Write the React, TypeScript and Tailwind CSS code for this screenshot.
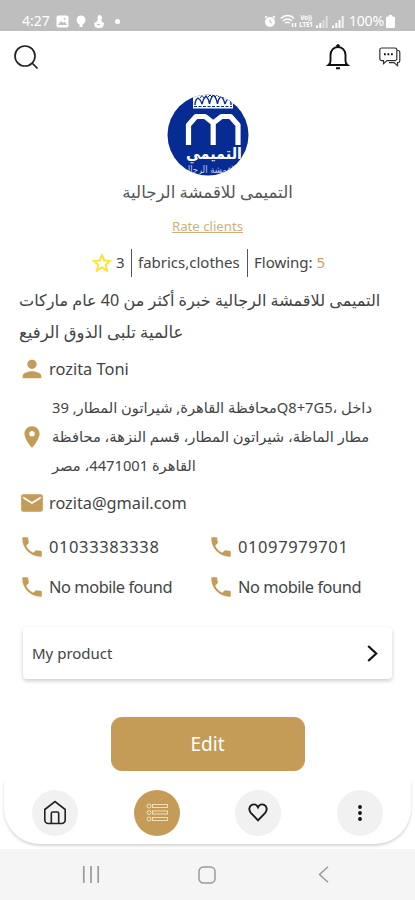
import type { ReactNode } from "react";
import { MdEmail, MdLocationOn, MdPerson, MdPhone } from "react-icons/md";

const StatusBar = () => (
    <div className="h-[31px] bg-[#bebebe] text-white flex items-end justify-between pl-[22px] pr-[20px] pb-[1px]">
        <div className="flex items-center h-[18px]">
            <span className="w-[29px] text-[14px] leading-none">4:27</span>
            <svg className="ml-[5px]" width="13" height="13" viewBox="0 0 13 13">
                <rect x="0.5" y="0.5" width="12" height="12" rx="2" fill="#fff" />
                <path d="M2 10l3-4 2 2 1.5-1.5L11 10z" fill="#bebebe" />
                <circle cx="8.5" cy="3.8" r="1" fill="#bebebe" />
            </svg>
            <svg className="ml-[7px]" width="10" height="13" viewBox="0 0 10 13">
                <circle cx="5" cy="5" r="4.5" fill="#fff" />
                <path d="M3.5 8.5h3V12h-3z" fill="#fff" />
            </svg>
            <svg className="ml-[7px]" width="13" height="13" viewBox="0 0 13 13">
                <path d="M6.5 0a2.5 2.5 0 0 1 1.8 4.3L9 7l2 1-1 4c-2 1.3-6 1.3-8 0L1 8l2.5-1 1.5-2.8A2.5 2.5 0 0 1 6.5 0z" fill="#fff" />
                <path d="M4 9.5h3" stroke="#bebebe" />
            </svg>
            <span className="ml-[9px] size-[5px] rounded-full bg-white" />
        </div>
        <div className="flex items-center h-[18px]">
            <svg width="12" height="13" viewBox="0 0 12 13">
                <circle cx="6" cy="7" r="5" fill="#fff" />
                <path d="M1 3l2-2M11 3L9 1" stroke="#fff" strokeWidth="1.6" />
                <path d="M6 4.5V7l2 1" stroke="#bebebe" fill="none" />
            </svg>
            <svg className="ml-[4px]" width="18" height="14" viewBox="0 0 18 14" fill="none" stroke="#fff" strokeWidth="1.5">
                <path d="M0.8 4.5c4-4 9.5-4 13.5 0M3 7c2.7-2.7 6.5-2.7 9 0M5.3 9.3c1.5-1.5 3.2-1.5 4.5 0" />
                <path d="M12.5 9v4M15.5 9v4" />
            </svg>
            <span className="w-[16px] text-[6.5px] leading-[7px] font-bold text-center tracking-[-0.3px]">
                <span className="block">Vo))</span>
                <span className="block">LTE1</span>
            </span>
            <svg className="ml-[2px]" width="12" height="13" viewBox="0 0 12 13" fill="#fff">
                <path d="M0 10.5h2V13H0zM3.3 8h2v5h-2z" />
                <path opacity="0.5" d="M6.5 5h2v8h-2zM9.7 1h2v12h-2z" />
            </svg>
            <svg className="ml-[4px]" width="12" height="13" viewBox="0 0 12 13" fill="#fff">
                <path d="M0 10.5h2V13H0zM3.3 8h2v5h-2zM6.5 5h2v8h-2z" />
                <path opacity="0.8" d="M9.7 1h2v12h-2z" />
            </svg>
            <span className="ml-[5px] w-[36px] text-[14px] leading-none tracking-[-0.2px]">100%</span>
            <svg className="ml-[1px]" width="9" height="13" viewBox="0 0 9 13">
                <path d="M3 0h3v1.5h1.5A1.5 1.5 0 0 1 9 3v8.5A1.5 1.5 0 0 1 7.5 13h-6A1.5 1.5 0 0 1 0 11.5V3a1.5 1.5 0 0 1 1.5-1.5H3z" fill="#fff" />
            </svg>
        </div>
    </div>
);

const Header = () => (
    <div className="h-[63px] flex items-start justify-between pl-[13px] pr-[14px] pt-[13px]">
        <svg width="26" height="26" viewBox="0 0 26 26" fill="none" stroke="#222" strokeWidth="1.7">
            <circle cx="12" cy="12" r="10" />
            <path d="M19 19l5.5 5.5" />
        </svg>
        <div className="flex gap-[29px]">
            <svg width="24" height="27" viewBox="0 0 24 27" fill="none" stroke="#111" strokeWidth="1.9">
                <path d="M12 3C7.5 3 4.5 6.5 4.5 11v6c0 2-.5 2.8-2 4h19c-1.5-1.2-2-2-2-4v-6c0-4.5-3-8-7.5-8z" />
                <path d="M10.5 2.5L12 1l1.5 1.5M10 24.3h4" />
            </svg>
            <svg className="mt-[3px]" width="22" height="21" viewBox="0 0 22 21" fill="none" stroke="#333" strokeWidth="1.2">
                <path d="M2.5 1h13.5a1.8 1.8 0 0 1 1.8 1.8v9a1.8 1.8 0 0 1-1.8 1.8H8l-3.5 3v-3h-2A1.8 1.8 0 0 1 .8 11.8v-9A1.8 1.8 0 0 1 2.5 1z" />
                <path d="M18 3.5h1a1.8 1.8 0 0 1 1.8 1.8v8.5a1.8 1.8 0 0 1-1.8 1.8h-.5v3l-3.5-3h-5" />
                <path d="M5 7.3h1.8M8.5 7.3h1.8M12 7.3h1.8" stroke="#111" strokeWidth="2" />
            </svg>
        </div>
    </div>
);

// Round shop logo with the crown, the arches and the brand name
const ShopLogo = () => (
    <svg className="mx-auto shrink-0" width="82" height="82" viewBox="0 0 82 82">
        <defs>
            <clipPath id="disc">
                <circle cx="41" cy="41" r="40.5" />
            </clipPath>
        </defs>
        <g clipPath="url(#disc)">
            <rect width="82" height="82" fill="#062b93" />
            <path d="M26 0h40v14.5H26z" fill="#fff" />
            <path d="M27 12.5h38" stroke="#062b93" strokeWidth="1" strokeDasharray="3 1.5" />
            <path d="M28 11q0-5 3-7 3 2 4 6 1-5 4-8 3 3 3.5 8 1-6 4-9 3 3 4 9 .5-5 3.5-8 3 3 4 8 1-4 4-6 2 2 2 7" fill="none" stroke="#062b93" strokeWidth="1.4" />
            <path d="M33 4l2-2.5L37 4M41 3l2-2 2 2M48 3l2-2 2 2M56 4l2-2.5L60 4" fill="none" stroke="#062b93" />
            <path d="M21.5 51V31l7.500-8.500h9l8.200 6.500 8.300-6.500h9l7.500 8.500v20M46.200 51V29" fill="none" stroke="#fff" strokeWidth="5.2" strokeLinejoin="round" />
            <text x="47" y="65" textAnchor="middle" textLength="56" lengthAdjust="spacingAndGlyphs" fill="#fff" fontSize="16" fontWeight="700" fontFamily="DejaVu Sans, sans-serif">التميمي</text>
            <text x="43" y="79" textAnchor="middle" textLength="52" lengthAdjust="spacingAndGlyphs" fill="#c3cdea" fontSize="10" fontFamily="DejaVu Sans, sans-serif">لاقمشة الرجال</text>
        </g>
    </svg>
);

const ContactRow = ({ icon, children, className = "text-[16.4px] tracking-[-0.45px]" }: { icon: ReactNode; children: ReactNode; className?: string }) => (
    <div className="flex items-center h-[40px] text-[#c49b57]">
        <span className="w-[24px] mr-[5px] flex justify-center *:shrink-0">{icon}</span>
        <span className={`text-[#444] whitespace-nowrap ${className}`}>{children}</span>
    </div>
);

const NavButton = ({ active, children }: { active?: boolean; children: ReactNode }) => (
    <div className={`size-[46px] rounded-full flex items-center justify-center ${active ? "bg-[#c49b57]" : "bg-[#f1f1f1]"}`}>{children}</div>
);

const BottomNav = () => (
    <div className="mx-[4px] h-[64px] rounded-b-[36px] bg-white shadow-[0_2px_3px_rgba(0,0,0,0.16)] flex items-center justify-between px-[28px] pt-[1px]">
        <NavButton>
            <svg width="24" height="25" viewBox="0 0 24 25" fill="none" stroke="#222" strokeWidth="1.6">
                <path d="M1.8 9.5L12 1.5l10.2 8V20a3.5 3.5 0 0 1-3.5 3.5H5.3A3.5 3.5 0 0 1 1.8 20z" />
                <path d="M8.3 23V13.5a1.5 1.5 0 0 1 1.5-1.5h4.4a1.5 1.5 0 0 1 1.5 1.5V23" />
            </svg>
        </NavButton>
        <NavButton active>
            <svg width="22" height="19" viewBox="0 0 22 19" fill="none" stroke="#f3e6cc" strokeWidth="0.9">
                <circle cx="3" cy="3" r="2" />
                <circle cx="3" cy="9.5" r="2" />
                <circle cx="3" cy="16" r="2" />
                <rect x="6.5" y="1.5" width="15" height="3" />
                <rect x="6.5" y="8" width="15" height="3" />
                <rect x="6.5" y="14.5" width="15" height="3" />
            </svg>
        </NavButton>
        <NavButton>
            <svg width="20" height="19" viewBox="0 0 20 19" fill="none" stroke="#1c1c1c" strokeWidth="1.9">
                <path d="M10 17.3L2.8 9.8C.4 7 1 3.3 3.8 1.9 6.2.8 8.8 1.8 10 4.3c1.2-2.5 3.8-3.5 6.2-2.4 2.8 1.4 3.4 5.1 1 7.9z" />
            </svg>
        </NavButton>
        <NavButton>
            <svg width="4" height="16" viewBox="0 0 4 16" fill="#111">
                <circle cx="2" cy="2" r="1.9" />
                <circle cx="2" cy="8" r="1.9" />
                <circle cx="2" cy="14" r="1.9" />
            </svg>
        </NavButton>
    </div>
);

const SystemBar = () => (
    <div className="mt-[5px] h-[51px] bg-[#f5f5f5] flex items-center justify-between pl-[82px] pr-[86px]">
        <svg width="18" height="17" viewBox="0 0 18 17" stroke="#9b9b9b" strokeWidth="1.7">
            <path d="M1.8 0v17M9 0v17M16.2 0v17" />
        </svg>
        <svg className="-ml-[4px]" width="18" height="18" viewBox="0 0 18 18" fill="none" stroke="#9b9b9b" strokeWidth="1.5">
            <rect x="1" y="1" width="16" height="16" rx="4.5" />
        </svg>
        <svg width="11" height="17" viewBox="0 0 11 17" fill="none" stroke="#9b9b9b" strokeWidth="1.5">
            <path d="M10 0.8L1.5 8.5l8.5 7.700" />
        </svg>
    </div>
);

const App = () => {
    return (
        <div className="w-full h-[900px] bg-white overflow-hidden flex flex-col text-[#444] font-['Noto_Sans','DejaVu_Sans',sans-serif]">
            <StatusBar />
            <Header />
            <ShopLogo />
            <div className="h-[31px] pt-[1px] flex items-center justify-center">
                <p dir="rtl" className="text-[16.6px] whitespace-nowrap text-[#555]">التميمى للاقمشة الرجالية</p>
            </div>
            <div className="h-[40px] flex items-center justify-center">
                <a className="text-[13.2px] text-[#cfaf7b] underline">Rate clients</a>
            </div>
            <div className="h-[31px] flex items-center pl-[92px] text-[15px] whitespace-nowrap">
                <svg width="20" height="20" viewBox="0 0 20 20" fill="none" stroke="#fbe437" strokeWidth="2">
                    <path d="M10 2.2l2.3 5.3 5.7.5-4.3 3.8 1.3 5.700-5-3-5 3 1.300-5.700L2 8l5.700-.5z" />
                </svg>
                <span className="ml-[4px] w-[15px]">3</span>
                <span className="w-px h-[28px] bg-[#555]" />
                <span className="ml-[6px] w-[109px]">fabrics,clothes</span>
                <span className="w-px h-[28px] bg-[#555]" />
                <span className="ml-[6px]">Flowing: <span className="text-[#c9a366]">5</span></span>
            </div>
            <div className="h-[71px] pt-[6px] pl-[19px] text-[16.1px] leading-[32px] whitespace-nowrap">
                <p dir="rtl" className="w-fit">التميمى للاقمشة الرجالية خبرة أكثر من 40 عام ماركات</p>
                <p dir="rtl" className="w-fit text-[16.5px]">عالمية تلبى الذوق الرفيع</p>
            </div>
            <div className="pl-[20px]">
                <ContactRow icon={<MdPerson size={28} />} className="text-[16.4px]">rozita Toni</ContactRow>
            </div>
            <div className="h-[95px] pl-[20px] flex items-center">
                <span className="w-[24px] mr-[8px] flex justify-center text-[#c49b57]">
                    <MdLocationOn size={26} className="shrink-0" />
                </span>
                <div className="text-[14.7px] leading-[29px] whitespace-nowrap">
                    <p dir="rtl" className="w-fit">داخل ،Q8+7G5محافظة القاهرة, شيراتون المطار, 39</p>
                    <p dir="rtl" className="w-fit">مطار الماظة، شيراتون المطار، قسم النزهة، محافظة</p>
                    <p dir="rtl" className="w-fit">القاهرة 4471001، مصر</p>
                </div>
            </div>
            <div className="-mt-[1px] pl-[20px]">
                <ContactRow icon={<MdEmail size={26} />} className="text-[16.3px]">rozita@gmail.com</ContactRow>
            </div>
            <div className="mt-[4px] pl-[20px] grid grid-cols-[189px_1fr]">
                <ContactRow icon={<MdPhone size={26} />} className="text-[16.5px] tracking-[0.6px]">01033383338</ContactRow>
                <ContactRow icon={<MdPhone size={26} />} className="text-[16.5px] tracking-[0.6px]">01097979701</ContactRow>
                <ContactRow icon={<MdPhone size={26} />}>No mobile found</ContactRow>
                <ContactRow icon={<MdPhone size={26} />}>No mobile found</ContactRow>
            </div>
            <div className="mt-[20px] mx-[23px] h-[52px] shrink-0 rounded-[4px] bg-white shadow-[0_2px_4px_rgba(0,0,0,0.2)] flex items-center justify-between pl-[9px] pr-[14px]">
                <span className="text-[15px]">My product</span>
                <svg width="11" height="17" viewBox="0 0 11 17" fill="none" stroke="#111" strokeWidth="2.2">
                    <path d="M1.2 1l8 7.5-8 7.5" />
                </svg>
            </div>
            <button className="mt-[38px] mx-auto w-[194px] h-[54px] shrink-0 rounded-[11px] bg-[#c49b57] text-white text-[19px]">Edit</button>
            <div className="mt-auto">
                <BottomNav />
                <SystemBar />
            </div>
        </div>
    );
};

export default App;
